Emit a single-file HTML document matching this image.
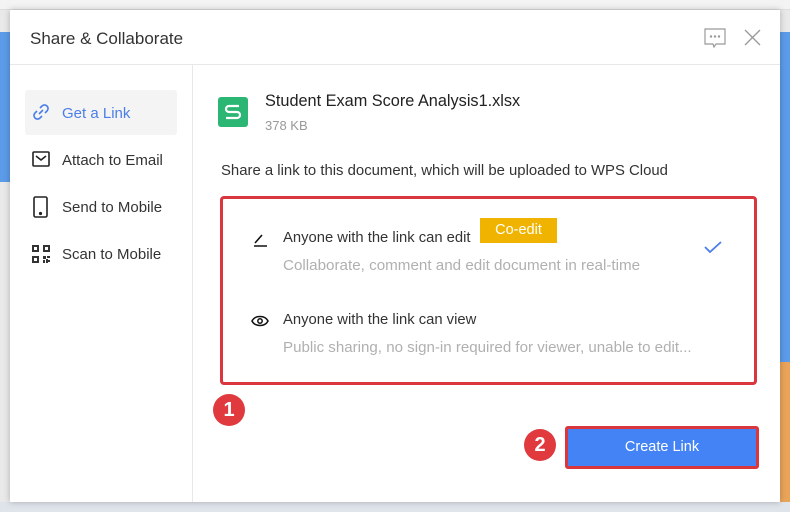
<!DOCTYPE html>
<html><head><meta charset="utf-8"><style>
*{margin:0;padding:0;box-sizing:border-box}
body{width:790px;height:512px;overflow:hidden;background:#e9e9e9;font-family:"Liberation Sans",sans-serif;position:relative}
.abs{position:absolute}
.dlg{left:10px;top:10px;width:770px;height:492px;background:#fff;box-shadow:0 0 6px rgba(0,0,0,.25)}
.t{font-size:16px;color:#333}
.menu{font-size:15px;color:#333}
</style></head><body>
<div class="abs" style="left:0;top:32px;width:10px;height:150px;background:#5b9be8"></div>
<div class="abs" style="left:780px;top:32px;width:10px;height:330px;background:#5b9be8"></div>
<div class="abs" style="left:780px;top:362px;width:10px;height:140px;background:#e9a45a"></div>
<div class="abs" style="left:0;top:502px;width:790px;height:10px;background:#dfe3ea"></div>
<div class="abs" style="left:0;top:0;width:790px;height:10px;background:#f3f3f3;border-bottom:1px solid #ddd"></div>
<div class="abs dlg">
  <div class="abs t" style="left:20px;top:19px;font-size:17px">Share &amp; Collaborate</div>
  <svg class="abs" style="left:693px;top:16px" width="24" height="24" viewBox="0 0 24 24" fill="none" stroke="#999" stroke-width="1.2"><path d="M2 3h20v15H13l-2 3-1-3H2z"/><circle cx="8" cy="10.5" r=".6" fill="#999"/><circle cx="12" cy="10.5" r=".6" fill="#999"/><circle cx="16" cy="10.5" r=".6" fill="#999"/></svg>
  <svg class="abs" style="left:734px;top:19px" width="17" height="17" viewBox="0 0 17 17" stroke="#999" stroke-width="1.3"><path d="M1 1L16 16M16 1L1 16"/></svg>
  <div class="abs" style="left:0;top:54px;width:770px;height:1px;background:#e8e8e8"></div>
  <div class="abs" style="left:182px;top:55px;width:1px;height:437px;background:#e8e8e8"></div>
  <div class="abs" style="left:15px;top:80px;width:152px;height:45px;background:#f4f4f5;border-radius:3px"></div>
  <svg class="abs" style="left:21px;top:92px" width="20" height="20" viewBox="0 0 20 20" fill="none" stroke="#4a7ee8" stroke-width="1.6"><path d="M8 12l4-4M9 6l2-2a3.5 3.5 0 015 5l-2 2M11 14l-2 2a3.5 3.5 0 01-5-5l2-2"/></svg>
  <div class="abs menu" style="left:52px;top:95px;color:#4a7ee8">Get a Link</div>
  <svg class="abs" style="left:22px;top:141px" width="18" height="16" viewBox="0 0 18 16" fill="none" stroke="#222" stroke-width="1.6"><rect x="1" y="1" width="16" height="14" rx="1"/><path d="M4 5l5 4 5-4"/></svg>
  <div class="abs menu" style="left:52px;top:142px">Attach to Email</div>
  <svg class="abs" style="left:23px;top:186px" width="15" height="22" viewBox="0 0 15 22" fill="none" stroke="#222" stroke-width="1.6"><rect x="1" y="1" width="13" height="20" rx="1.5"/><circle cx="7.5" cy="17.5" r=".8" fill="#222"/></svg>
  <div class="abs menu" style="left:52px;top:189px">Send to Mobile</div>
  <svg class="abs" style="left:22px;top:235px" width="18" height="18" viewBox="0 0 18 18" fill="#333"><path d="M0 0h7v7H0zM2 2v3h3V2zM11 0h7v7h-7zM13 2v3h3V2zM0 11h7v7H0zM2 13v3h3v-3zM11 11h3v3h-3zM15 11h3v2h-3zM14 14h2v4h-2zM11 15h2v3h-2zM16 15h2v2h-2z"/></svg>
  <div class="abs menu" style="left:52px;top:236px">Scan to Mobile</div>
  <div class="abs" style="left:208px;top:87px;width:30px;height:30px;background:#2bb673;border-radius:3px"></div>
  <svg class="abs" style="left:213px;top:93px" width="20" height="18" viewBox="0 0 20 18" fill="none" stroke="#fff" stroke-width="2.2"><path d="M16 3H6a3 3 0 000 6h8a3 3 0 010 6H3"/></svg>
  <div class="abs" style="left:255px;top:82px;font-size:16.3px;color:#222">Student Exam Score Analysis1.xlsx</div>
  <div class="abs" style="left:255px;top:108px;font-size:13px;color:#999">378 KB</div>
  <div class="abs" style="left:211px;top:153px;font-size:14.9px;color:#333">Share a link to this document, which will be uploaded to WPS Cloud</div>
  <div class="abs" style="left:210px;top:186px;width:537px;height:189px;border:3px solid #d9363e;border-radius:4px"></div>
  <svg class="abs" style="left:243px;top:223px" width="15" height="14" viewBox="0 0 15 14" stroke="#111" stroke-width="1.6" fill="none"><path d="M2 10l7-8M1 13h13"/></svg>
  <div class="abs" style="left:273px;top:220px;font-size:14.8px;color:#333">Anyone with the link can edit</div>
  <div class="abs" style="left:470px;top:208px;width:77px;height:25px;background:#f0b400;color:#fff;font-size:14.5px;text-align:center;line-height:25px">Co-edit</div>
  <div class="abs" style="left:273px;top:247px;font-size:15.2px;color:#b0b0b0">Collaborate, comment and edit document in real-time</div>
  <svg class="abs" style="left:693px;top:230px" width="20" height="14" viewBox="0 0 20 14" fill="none" stroke="#4a7ee8" stroke-width="1.8"><path d="M2 7l5 5L18 2"/></svg>
  <svg class="abs" style="left:241px;top:304px" width="18" height="14" viewBox="0 0 18 14" fill="none" stroke="#111" stroke-width="1.5"><path d="M1 7c3-6 13-6 16 0-3 6-13 6-16 0z"/><circle cx="9" cy="7" r="2.2"/></svg>
  <div class="abs" style="left:273px;top:302px;font-size:14.8px;color:#333">Anyone with the link can view</div>
  <div class="abs" style="left:273px;top:329px;font-size:15.1px;color:#b0b0b0">Public sharing, no sign-in required for viewer, unable to edit...</div>
  <div class="abs" style="left:203px;top:384px;width:32px;height:32px;border-radius:50%;background:#e03a3e;color:#fff;font-size:20px;font-weight:bold;text-align:center;line-height:32px">1</div>
  <div class="abs" style="left:514px;top:419px;width:32px;height:32px;border-radius:50%;background:#e03a3e;color:#fff;font-size:20px;font-weight:bold;text-align:center;line-height:32px">2</div>
  <div class="abs" style="left:555px;top:416px;width:194px;height:43px;border:3px solid #d9363e;border-radius:3px;background:#4383f5;color:#fff;font-size:14.5px;text-align:center;line-height:37px">Create Link</div>
</div>
</body></html>
